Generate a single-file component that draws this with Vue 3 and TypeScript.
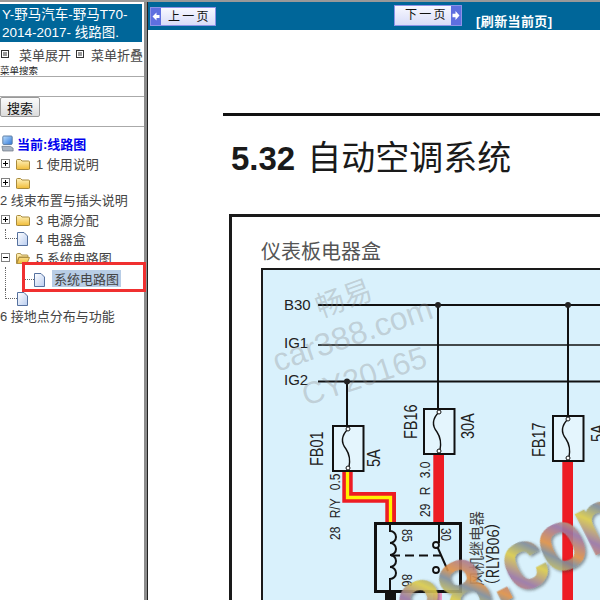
<script setup lang="ts">
interface Fuse { x: number; y: number; cx: number; }
const fuses: Fuse[] = [
  { x: 333, y: 426, cx: 348 },
  { x: 424, y: 409, cx: 439 },
  { x: 553, y: 416, cx: 568 },
];
const rails = [
  { y: 305, w: 2 },
  { y: 345, w: 1.6 },
  { y: 381.5, w: 1.8 },
];
const fusePath = (f: Fuse): string =>
  `M${f.cx} ${f.y + 3}C${f.cx - 8} ${f.y + 11} ${f.cx - 6} ${f.y + 18} ${f.cx - 2} ${f.y + 23}C${f.cx + 2} ${f.y + 29} ${f.cx + 2} ${f.y + 36} ${f.cx + 1} ${f.y + 41}`;
</script>

<template>
  <div class="page">
    <aside class="side">
      <div class="brand">Y-野马汽车-野马T70-2014-2017- 线路图.</div>
      <div class="ctrl">
        <svg class="mini" viewBox="0 0 8 8"><rect x=".5" y=".5" width="7" height="7" fill="#fff" stroke="#333"/><path d="M2 3h4M2 5h4" stroke="#333"/></svg>
        <span class="ctl-t">菜单展开</span>
        <svg class="mini" viewBox="0 0 8 8"><rect x=".5" y=".5" width="7" height="7" fill="#fff" stroke="#333"/><path d="M2 3h4M2 5h4" stroke="#333"/></svg>
        <span class="ctl-t">菜单折叠</span>
      </div>
      <div class="search-label">菜单搜索</div>
      <div class="inputbar"></div>
      <div class="btnrow"><button class="search">搜索</button></div>
      <div class="tree">
        <div class="cur">
          <svg class="pc" viewBox="0 0 16 18" width="15" height="17"><defs><linearGradient id="scr" x1="0" y1="0" x2="1" y2="1"><stop offset="0" stop-color="#bfe0ff"/><stop offset="1" stop-color="#2f78d8"/></linearGradient></defs><rect x="3" y="1" width="10" height="9" rx="1" fill="url(#scr)" stroke="#5a7aa0"/><path d="M2 12h9l3 2v3H3z" fill="#a9b4c2" stroke="#66707c" stroke-width=".7"/></svg>
          <span>当前:线路图</span>
        </div>
        <div class="row">
          <svg class="pm" viewBox="0 0 9 9"><rect x=".5" y=".5" width="8" height="8" fill="#fff" stroke="#808080"/><path d="M2 4.500h5M4.500 2v5" stroke="#000"/></svg>
          <svg class="fold" viewBox="0 0 14 12"><defs><linearGradient id="fg" x1="0" y1="0" x2="0" y2="1"><stop offset="0" stop-color="#fff3c0"/><stop offset="1" stop-color="#f0bc38"/></linearGradient></defs><path d="M.5 2.500q0-1 1-1h3l1.500 1.500h6.500q1 0 1 1v7q0 .5-1 .5h-11q-1 0-1-.5z" fill="url(#fg)" stroke="#a88a3c"/></svg>
          <span class="lbl">1 使用说明</span>
        </div>
        <div class="row">
          <svg class="pm" viewBox="0 0 9 9"><rect x=".5" y=".5" width="8" height="8" fill="#fff" stroke="#808080"/><path d="M2 4.500h5M4.500 2v5" stroke="#000"/></svg>
          <svg class="fold" viewBox="0 0 14 12"><path d="M.5 2.500q0-1 1-1h3l1.500 1.500h6.500q1 0 1 1v7q0 .5-1 .5h-11q-1 0-1-.5z" fill="url(#fg)" stroke="#a88a3c"/></svg>
        </div>
        <div class="plain">2 线束布置与插头说明</div>
        <div class="row">
          <svg class="pm" viewBox="0 0 9 9"><rect x=".5" y=".5" width="8" height="8" fill="#fff" stroke="#808080"/><path d="M2 4.500h5M4.500 2v5" stroke="#000"/></svg>
          <svg class="fold" viewBox="0 0 14 12"><path d="M.5 2.500q0-1 1-1h3l1.500 1.500h6.500q1 0 1 1v7q0 .5-1 .5h-11q-1 0-1-.5z" fill="url(#fg)" stroke="#a88a3c"/></svg>
          <span class="lbl">3 电源分配</span>
        </div>
        <div class="row">
          <span class="dots"></span>
          <svg class="doc" viewBox="0 0 11 14"><defs><linearGradient id="dg" x1="0" y1="0" x2="1" y2="1"><stop offset="0" stop-color="#fff"/><stop offset="1" stop-color="#b9cdf0"/></linearGradient></defs><path d="M.5.500h6.500l3.500 3.500v9.500h-10z" fill="url(#dg)" stroke="#55719f"/></svg>
          <span class="lbl doc-lbl">4 电器盒</span>
        </div>
        <div class="row">
          <svg class="pm" viewBox="0 0 9 9"><rect x=".5" y=".5" width="8" height="8" fill="#fff" stroke="#808080"/><path d="M2 4.500h5" stroke="#000"/></svg>
          <svg class="fold" viewBox="0 0 14 12"><path d="M.5 3q0-1.500 1-1.500h3l1 1.500h5.500q1 0 1 1v1h-9l-2.500 6.500zM3 5.500h10.500l-2.500 6h-10z" fill="url(#fg)" stroke="#a88a3c" stroke-width=".9"/></svg>
          <span class="lbl">5 系统电路图</span>
        </div>
        <div class="row sub">
          <span class="vline"></span>
          <span class="dots short"></span>
          <svg class="doc" viewBox="0 0 11 14"><path d="M.5.500h6.500l3.500 3.500v9.500h-10z" fill="url(#dg)" stroke="#55719f"/></svg>
          <span class="sel">系统电路图</span>
          <div class="redbox"></div>
        </div>
        <div class="row">
          <span class="dots"></span>
          <svg class="doc" viewBox="0 0 11 14"><path d="M.5.500h6.500l3.500 3.500v9.500h-10z" fill="url(#dg)" stroke="#55719f"/></svg>
        </div>
        <div class="plain">6 接地点分布与功能</div>
      </div>
    </aside>
    <main class="main">
      <div class="nav">
        <span class="pg prev">
          <svg class="arr" viewBox="0 0 10 17" preserveAspectRatio="none"><rect width="10" height="17" fill="#5f6fe0"/><path d="M1.500 8.500l4-4v2.500h3v3h-3v2.500z" fill="#fff"/></svg>
          <span class="pg-t">上 一 页</span>
        </span>
        <span class="pg next">
          <span class="pg-t">下 一 页</span>
          <svg class="arr" viewBox="0 0 10 17" preserveAspectRatio="none"><rect width="10" height="17" fill="#5f6fe0"/><path d="M8.500 8.500l-4-4v2.500h-3v3h3v2.500z" fill="#fff"/></svg>
        </span>
        <span class="refresh">[刷新当前页]</span>
      </div>
      <div class="doc-area">
        <div class="rule"></div>
        <h1 class="title"><b>5.32</b><span class="title-t">自动空调系统</span></h1>
        <div class="frame">
          <div class="cap">仪表板电器盒</div>
          <div class="panel">
            <svg class="wires" viewBox="0 0 600 600" width="600" height="600">
              <defs>
                <linearGradient id="wmg" gradientUnits="userSpaceOnUse" x1="420" y1="600" x2="470" y2="560" spreadMethod="repeat">
                  <stop offset="0" stop-color="#e09044"/>
                  <stop offset=".3" stop-color="#9a74a4"/>
                  <stop offset=".6" stop-color="#dccb48"/>
                  <stop offset=".85" stop-color="#7f8c9a"/>
                  <stop offset="1" stop-color="#e09044"/>
                </linearGradient>
                <filter id="wms" x="-10%" y="-10%" width="120%" height="120%">
                  <feDropShadow dx="1" dy="2" stdDeviation="1.500" flood-color="#333" flood-opacity=".6"/>
                </filter>
              </defs>
              <g stroke="#111">
                <line v-for="r in rails" :key="r.y" x1="318" :y1="r.y" x2="600" :y2="r.y" :stroke-width="r.w" />
                <g stroke-width="2">
                  <line x1="347" y1="381" x2="347" y2="426" />
                  <line x1="438" y1="305" x2="438" y2="409" />
                  <line x1="568" y1="305" x2="568" y2="416" />
                </g>
              </g>
              <g fill="#222">
                <circle cx="347" cy="381.500" r="3" />
                <circle cx="438" cy="305" r="3" />
                <circle cx="568" cy="305" r="3" />
              </g>
              <g fill="#ed1c24">
                <rect x="433.300" y="454" width="10.700" height="69" />
                <rect x="562.300" y="461" width="10.700" height="139" />
                <path d="M342.300 471h10.400v21H396v31h-10.700v-20.300h-43z" />
              </g>
              <path d="M347.500 471v26.500h43v25.500" fill="none" stroke="#fff200" stroke-width="3.300" />
              <g fill="#e4f5fd" stroke="#111" stroke-width="2">
                <rect v-for="f in fuses" :key="f.x" :x="f.x" :y="f.y" width="30.500" height="45" />
              </g>
              <g v-for="f in fuses" :key="'c' + f.x" fill="none" stroke="#111">
                <path :d="fusePath(f)" stroke-width="1.400" />
                <circle :cx="f.cx" :cy="f.y + 3" r="2" fill="#fff" stroke-width="1" />
                <circle :cx="f.cx" :cy="f.y + 42" r="2" fill="#fff" stroke-width="1" />
              </g>
              <rect x="375.500" y="523.500" width="85" height="68" fill="none" stroke="#111" stroke-width="3" />
              <path d="M390 523v8a6 6 0 0 1 0 12a6 6 0 0 1 0 12a6 6 0 0 1 0 12a6 6 0 0 1 0 12v12" fill="none" stroke="#111" stroke-width="2" />
              <path d="M391 555.500h50" stroke="#111" stroke-width="2" stroke-dasharray="9 5" />
              <path d="M439 523v20M437 546l11 25" stroke="#111" stroke-width="2" fill="none" />
              <circle cx="436" cy="545" r="3" fill="#e4f5fd" stroke="#111" stroke-width="1.800" />
              <circle cx="436" cy="570" r="3" fill="#e4f5fd" stroke="#111" stroke-width="1.800" />
              <rect x="385" y="590" width="11" height="10" fill="#111" />
              <rect x="433" y="593" width="9" height="7" fill="#f4a0d0" />
              <g class="lab">
                <text x="284" y="309.500" font-size="15">B30</text>
                <text x="284" y="348" font-size="15">IG1</text>
                <text x="284" y="385" font-size="15">IG2</text>
                <text transform="translate(323 466) rotate(-90) scale(1 1.250)" font-size="14.500">FB01</text>
                <text transform="translate(417 439) rotate(-90) scale(1 1.250)" font-size="14.500">FB16</text>
                <text transform="translate(545 457) rotate(-90) scale(1 1.250)" font-size="14.500">FB17</text>
                <text transform="translate(380 467) rotate(-90) scale(1 1.250)" font-size="14.500">5A</text>
                <text transform="translate(474 439) rotate(-90) scale(1 1.250)" font-size="14.500">30A</text>
                <text transform="translate(604 442) rotate(-90) scale(1 1.250)" font-size="14.500">5A</text>
                <text transform="translate(340 540) rotate(-90) scale(1 1.250)" font-size="12" word-spacing="5">28 R/Y 0.5</text>
                <text transform="translate(430 517) rotate(-90) scale(1 1.250)" font-size="12" word-spacing="5">29 R 3.0</text>
                <text class="cjk" transform="translate(499 593) rotate(-90) scale(1 1.150)" font-size="14.500">（RLYB06）</text>
                <text class="cjk" transform="translate(482 586) rotate(-90)" font-size="15" fill="#444">风机继电器</text>
                <text transform="translate(402 529) rotate(90) scale(1 1.200)" font-size="11.500">85</text>
                <text transform="translate(402 574) rotate(90) scale(1 1.200)" font-size="11.500">86</text>
                <text transform="translate(441 528) rotate(90) scale(1 1.200)" font-size="11.500">30</text>
              </g>
              <g class="wm">
                <text class="cjk" transform="translate(320 318) rotate(-20)" font-size="29">畅易</text>
                <text transform="translate(277 372) rotate(-19)" font-size="32">car388.com</text>
                <text transform="translate(306 406) rotate(-18)" font-size="31">CY20165</text>
              </g>
              <text class="big" transform="translate(417.500 644) rotate(-27)" font-size="80" fill="url(#wmg)" stroke="url(#wmg)" stroke-width="4" filter="url(#wms)">88.com</text>
            </svg>
          </div>
        </div>
      </div>
    </main>
  </div>
</template>

<style>
html, body { margin: 0; }
</style>

<style scoped>
.page { width: 600px; height: 600px; box-sizing: border-box; border-top: 2px solid #999; display: flex; overflow: hidden; background: #fff; font-family: "Liberation Sans", "Noto Sans CJK SC", sans-serif; color: #444; }
.side { width: 144px; flex: none; border-right: 3px solid #8c8c8c; font-size: 13px; white-space: nowrap; position: relative; z-index: 1; }
.brand { box-sizing: border-box; background: #006699; color: #fff; margin-top: 2px; height: 38px; width: 142px; padding: 2px 2px 0; font-size: 13.5px; line-height: 18px; white-space: normal; overflow: hidden; }
.ctrl { display: flex; align-items: center; height: 24px; }
.mini { width: 8px; height: 8px; flex: none; margin-left: 1px; margin-right: 10px; }
.mini + .ctl-t + .mini { margin-left: 5px; margin-right: 7px; }
.search-label { font-size: 9.5px; height: 10px; line-height: 10px; color: #222; }
.inputbar { box-sizing: border-box; height: 21px; border-top: 1px solid #aaa; border-bottom: 1px solid #aaa; }
.btnrow { box-sizing: border-box; height: 30px; border-bottom: 1px solid #aaa; }
.search { display: block; box-sizing: border-box; height: 20px; width: 40px; padding: 0; font: 13px "Noto Sans CJK SC", sans-serif; color: #111; background: linear-gradient(#fbfbfb, #dcdcdc); border: 1px solid #999; border-radius: 2px; }
.tree { margin-top: 7px; }
.cur { display: flex; align-items: center; height: 19px; margin-bottom: 1px; color: #0000ee; font-weight: 700; font-size: 13px; }
.pc { margin-right: 2px; flex: none; }
.row { display: flex; align-items: center; height: 19px; position: relative; }
.pm { width: 9px; height: 9px; margin-left: 1px; margin-right: 6px; flex: none; }
.fold { width: 14px; height: 12px; flex: none; }
.dots { align-self: flex-start; box-sizing: border-box; width: 12px; height: 10px; margin-left: 5px; border-left: 1px dotted #666; border-bottom: 1px dotted #666; flex: none; }
.doc { width: 11px; height: 14px; flex: none; }
.lbl { margin-left: 6px; }
.doc-lbl { margin-left: 8px; }
.plain { height: 18px; line-height: 18px; }
.sub { margin-top: 3px; padding-left: 25px; }
.vline { position: absolute; left: 5px; top: -3px; bottom: 0; border-left: 1px dotted #666; }
.dots.short { margin-left: 0; width: 9px; border-left: 0; }
.sel { background: #b8cde6; height: 17px; line-height: 19px; padding: 0 2px; margin-left: 7px; margin-bottom: 3px; }
.redbox { position: absolute; left: 22px; top: -8px; width: 124px; height: 30px; border: 3px solid #f03030; box-sizing: border-box; }
.main { flex: 1; min-width: 0; overflow: hidden; border-left: 1px solid #222; }
.nav { height: 28px; background: #006699; display: flex; align-items: flex-start; }
.pg { box-sizing: border-box; display: flex; align-items: stretch; background: linear-gradient(#f8f8ff, #d8dcf8); border: 1px solid #8d92e6; color: #111; font-size: 12px; white-space: nowrap; }
.pg-t { font-family: "Noto Sans CJK SC", sans-serif; word-spacing: -.5px; line-height: 16px; }
.arr { width: 10px; flex: none; }
.prev { margin: 5px 0 0 2px; width: 66px; height: 19px; gap: 7px; }
.next { margin: 3px 0 0 178px; width: 68px; height: 21px; padding-left: 10px; justify-content: space-between; }
.refresh { color: #fff; font-weight: 700; font-size: 13px; letter-spacing: .4px; line-height: 18px; margin: 11px 0 0 14px; white-space: nowrap; }
.doc-area { padding-left: 75px; }
.rule { height: 3px; background: #111; margin-top: 83px; }
.title { margin: 14px 0 0 8px; height: 52px; font: 400 33px/52px "Noto Sans CJK SC", sans-serif; color: #1a1a1a; white-space: nowrap; overflow: hidden; }
.title b { font-family: "Liberation Sans", sans-serif; font-weight: 700; }
.title-t { font-size: 34px; margin-left: 12px; }
.frame { margin: 32px 0 0 6px; height: 400px; border: 3px solid #1a1a1a; border-right: 0; }
.cap { box-sizing: border-box; height: 51px; padding: 20px 0 0 29px; font-size: 20px; line-height: 28px; color: #555; font-family: "Noto Sans CJK SC", sans-serif; }
.panel { margin-left: 29px; height: 400px; background: #d9f1fc; border: 2px solid #1a1a1a; border-right: 0; position: relative; overflow: hidden; }
.wires { position: absolute; left: -263px; top: -270px; }
.lab { font-family: "Liberation Sans", sans-serif; fill: #222; }
.cjk { font-family: "Noto Sans CJK SC", sans-serif; }
.wm { font-family: "Liberation Sans", sans-serif; fill: #8a8a8a; fill-opacity: .33; }
.big { font-family: "Liberation Sans", sans-serif; opacity: .9; }
</style>
